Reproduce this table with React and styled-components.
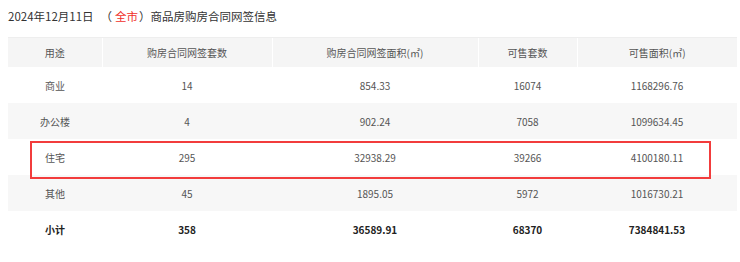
import React from 'react';
import styled, { createGlobalStyle } from 'styled-components';

const GlobalStyle = createGlobalStyle`
  body {
    margin: 0;
    background: #fff;
    font-family: "Noto Sans CJK SC", "Noto Sans", sans-serif;
  }
`;

const Page = styled.div`
  padding: 6px 3px 0 8px;
`;

const Title = styled.div`
  font-size: 11.5px;
  line-height: 20px;
  color: #333;
  margin-bottom: 11px;
`;

const Paren = styled.span`
  margin-left: 7px;
`;

const City = styled.span`
  color: #f0302a;
  margin: 0 1px 0 3px;
`;

const TableWrap = styled.div`
  position: relative;
  width: 729px;
`;

const Table = styled.table`
  width: 100%;
  border-collapse: collapse;
  table-layout: fixed;
  font-size: 10px;
  color: #555;
`;

const Th = styled.th`
  height: 29px;
  padding: 0;
  background: #f5f5f5;
  font-weight: normal;
  color: #555;
  border-left: 1px solid #fff;
  border-top: 1px solid #eee;
  &:first-child {
    border-left: 0;
  }
`;

const Tr = styled.tr`
  background: ${({ $gray }) => ($gray ? '#f7f7f7' : '#fff')};
`;

const Td = styled.td`
  height: 36px;
  padding: 0;
  text-align: center;
  font-weight: ${({ $bold }) => ($bold ? 'bold' : 'normal')};
  color: ${({ $bold }) => ($bold ? '#222' : '#555')};
`;

const Highlight = styled.div`
  position: absolute;
  left: 22px;
  top: 104px;
  width: 681px;
  height: 38px;
  border: 2px solid #f23c3c;
  box-sizing: border-box;
  pointer-events: none;
`;

const columns = [
  { title: '用途', width: 94 },
  { title: '购房合同网签套数', width: 170 },
  { title: '购房合同网签面积(㎡)', width: 206 },
  { title: '可售套数', width: 99 },
  { title: '可售面积(㎡)', width: 160 },
];

const rows = [
  ['商业', '14', '854.33', '16074', '1168296.76'],
  ['办公楼', '4', '902.24', '7058', '1099634.45'],
  ['住宅', '295', '32938.29', '39266', '4100180.11'],
  ['其他', '45', '1895.05', '5972', '1016730.21'],
];

const total = ['小计', '358', '36589.91', '68370', '7384841.53'];

const App = () => (
  <Page>
    <GlobalStyle />
    <Title>
      2024年12月11日<Paren>（</Paren>
      <City>全市</City>）商品房购房合同网签信息
    </Title>
    <TableWrap>
      <Table>
        <colgroup>
          {columns.map((c) => (
            <col key={c.title} style={{ width: c.width }} />
          ))}
        </colgroup>
        <thead>
          <tr>
            {columns.map((c) => (
              <Th key={c.title}>{c.title}</Th>
            ))}
          </tr>
        </thead>
        <tbody>
          {rows.map((r, i) => (
            <Tr key={r[0]} $gray={i % 2 === 1}>
              {r.map((v, j) => (
                <Td key={j}>{v}</Td>
              ))}
            </Tr>
          ))}
          <Tr>
            {total.map((v, j) => (
              <Td key={j} $bold>
                {v}
              </Td>
            ))}
          </Tr>
        </tbody>
      </Table>
      <Highlight />
    </TableWrap>
  </Page>
);

export default App;
